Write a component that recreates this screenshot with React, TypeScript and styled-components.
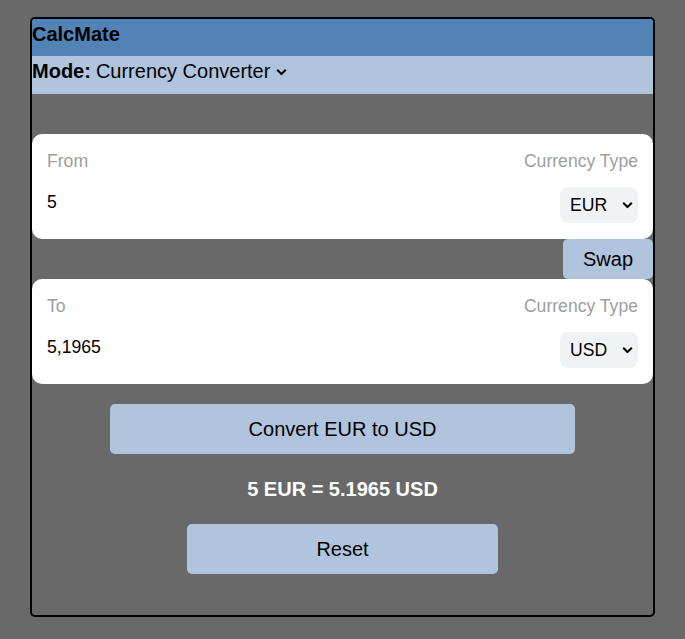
import React from "react";
import styled, { createGlobalStyle } from "styled-components";

const GlobalStyle = createGlobalStyle`
  html, body {
    margin: 0;
    padding: 0;
    background: #696969;
    font-family: "Liberation Sans", Arial, sans-serif;
  }
  * { box-sizing: border-box; }
`;

const Page = styled.div`
  display: flex;
  justify-content: center;
  padding-top: 17px;
`;

const Calculator = styled.div`
  width: 625px;
  border: 2px solid #000;
  border-radius: 5px;
  overflow: hidden;
  padding-bottom: 41px;
`;

const Header = styled.div`
  background: #5283b6;
  height: 37px;
  padding-top: 4px;
  font-size: 20px;
  line-height: 23px;
  font-weight: bold;
  color: #000;
`;

const ModeBar = styled.div`
  background: #b0c4de;
  height: 38px;
  padding-top: 4px;
  display: flex;
  align-items: flex-start;
  font-size: 20px;
  line-height: 23px;
  color: #000;
`;

const ModeLabel = styled.label`
  font-weight: bold;
`;

const SelectWrap = styled.div`
  position: relative;
  display: inline-flex;
`;

const ModeSelect = styled.select`
  appearance: none;
  -webkit-appearance: none;
  background: transparent;
  border: none;
  outline: none;
  font-family: inherit;
  font-size: 20px;
  line-height: 23px;
  height: 23px;
  color: #000;
  padding: 0 22px 0 0;
  margin-left: 5px;
`;

const Chevron = styled.svg<{ $right: number }>`
  position: absolute;
  right: ${(p) => p.$right}px;
  top: 50%;
  transform: translateY(-50%);
  pointer-events: none;
`;

const Body = styled.div`
  display: flex;
  flex-direction: column;
  padding-top: 40px;
`;

const Card = styled.div`
  background: #fff;
  border-radius: 10px;
  padding: 16px 15px 16px;
`;

const CardHead = styled.div`
  display: flex;
  justify-content: space-between;
  font-size: 17.6px;
  line-height: 22px;
  color: #9e9e9e;
`;

const CardRow = styled.div`
  display: flex;
  justify-content: space-between;
  align-items: flex-start;
  margin-top: 15px;
`;

const ValueInput = styled.input`
  border: none;
  outline: none;
  background: transparent;
  padding: 0;
  height: 30px;
  width: 300px;
  font-family: inherit;
  font-size: 17.6px;
  color: #000;
`;

const CurrencySelect = styled.select`
  appearance: none;
  -webkit-appearance: none;
  background: #f1f2f4;
  border: none;
  outline: none;
  border-radius: 8px;
  height: 36px;
  width: 78px;
  padding: 0 0 0 10px;
  font-family: inherit;
  font-size: 17.6px;
  color: #000;
`;

const SwapRow = styled.div`
  display: flex;
  justify-content: flex-end;
`;

const ActionButton = styled.button<{ $width: string; $height: number }>`
  width: ${(p) => p.$width};
  height: ${(p) => p.$height}px;
  background: #b0c4de;
  border: none;
  border-radius: 5px;
  font-family: inherit;
  font-size: 20px;
  color: #000;
  padding: 0;
  cursor: pointer;
`;

const CenteredButton = styled(ActionButton)`
  align-self: center;
`;

const ConvertButton = styled(CenteredButton)`
  margin-top: 20px;
`;

const Result = styled.div`
  margin: 24px 0 23px;
  line-height: 23px;
  font-size: 20px;
  font-weight: bold;
  color: #fff;
  text-align: center;
`;

const ChevronIcon = ({ right }: { right: number }) => (
  <Chevron $right={right} width="11" height="7" viewBox="0 0 11 7">
    <path d="M1.2 1.2 L5.5 5.5 L9.8 1.2" fill="none" stroke="#000" strokeWidth="2" />
  </Chevron>
);

const CurrencyCard = ({
  label,
  value,
  currency,
}: {
  label: string;
  value: string;
  currency: string;
}) => (
  <Card>
    <CardHead>
      <span>{label}</span>
      <span>Currency Type</span>
    </CardHead>
    <CardRow>
      <ValueInput defaultValue={value} />
      <SelectWrap>
        <CurrencySelect defaultValue={currency}>
          <option value="EUR">EUR</option>
          <option value="USD">USD</option>
        </CurrencySelect>
        <ChevronIcon right={5} />
      </SelectWrap>
    </CardRow>
  </Card>
);

export default function App() {
  return (
    <>
      <GlobalStyle />
      <Page>
        <Calculator>
          <Header>CalcMate</Header>
          <ModeBar>
            <ModeLabel>Mode:</ModeLabel>
            <SelectWrap>
              <ModeSelect defaultValue="currency">
                <option value="currency">Currency Converter</option>
              </ModeSelect>
              <ChevronIcon right={6} />
            </SelectWrap>
          </ModeBar>
          <Body>
            <CurrencyCard label="From" value="5" currency="EUR" />
            <SwapRow>
              <ActionButton $width="90px" $height={40}>
                Swap
              </ActionButton>
            </SwapRow>
            <CurrencyCard label="To" value="5,1965" currency="USD" />
            <ConvertButton $width="75%" $height={50}>
              Convert EUR to USD
            </ConvertButton>
            <Result>5 EUR = 5.1965 USD</Result>
            <CenteredButton $width="50%" $height={50}>
              Reset
            </CenteredButton>
          </Body>
        </Calculator>
      </Page>
    </>
  );
}
